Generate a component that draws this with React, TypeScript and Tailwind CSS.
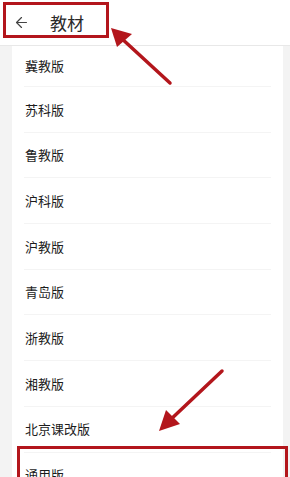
import { ArrowLeft } from "lucide-react";

const items = [
  "冀教版",
  "苏科版",
  "鲁教版",
  "沪科版",
  "沪教版",
  "青岛版",
  "浙教版",
  "湘教版",
  "北京课改版",
  "通用版",
];

export default function App() {
  return (
    <div
      className="relative h-[477px] w-[290px] overflow-hidden bg-[#f3f3f3] text-[#1c1c1c]"
      style={{ fontFamily: '"Noto Sans CJK SC", "Noto Sans", sans-serif' }}
    >
      {/* header */}
      <div className="flex h-[46px] items-center border-b border-[#e8e8e8] bg-white pb-[1px]">
        <ArrowLeft className="ml-[13px] h-[17px] w-[17px] text-[#444]" strokeWidth={1.7} />
        <span className="ml-[20px] text-[17px] leading-none text-[#2a2a2a]">教材</span>
      </div>

      {/* list card */}
      <div className="mx-[12px] w-[271px] bg-white px-[12px]">
        {items.map((t, i) => (
          <div
            key={t}
            className={
              "flex items-center border-b border-[#f4f4f4] pl-[1px] text-[13px] " +
              (i === 0 ? "h-[41px]" : "h-[45.7px]")
            }
          >
            {t}
          </div>
        ))}
      </div>

      {/* annotations */}
      <div className="absolute left-[3px] top-[2px] h-[36px] w-[106px] border-[3px] border-[#b3161c]" />
      <div className="absolute left-[17px] top-[446px] h-[44px] w-[271px] border-[3px] border-[#b3161c]" />
      <svg className="absolute left-0 top-0" width="290" height="477" viewBox="0 0 290 477">
        <line x1="170" y1="83" x2="120" y2="37" stroke="#b3161c" strokeWidth="3.5" strokeLinecap="round" />
        <polygon points="111,28 132,34 117,47" fill="#b3161c" />
        <line x1="222" y1="371" x2="168" y2="422" stroke="#b3161c" strokeWidth="3.5" strokeLinecap="round" />
        <polygon points="159,431 166,410 180,424" fill="#b3161c" />
      </svg>
    </div>
  );
}
